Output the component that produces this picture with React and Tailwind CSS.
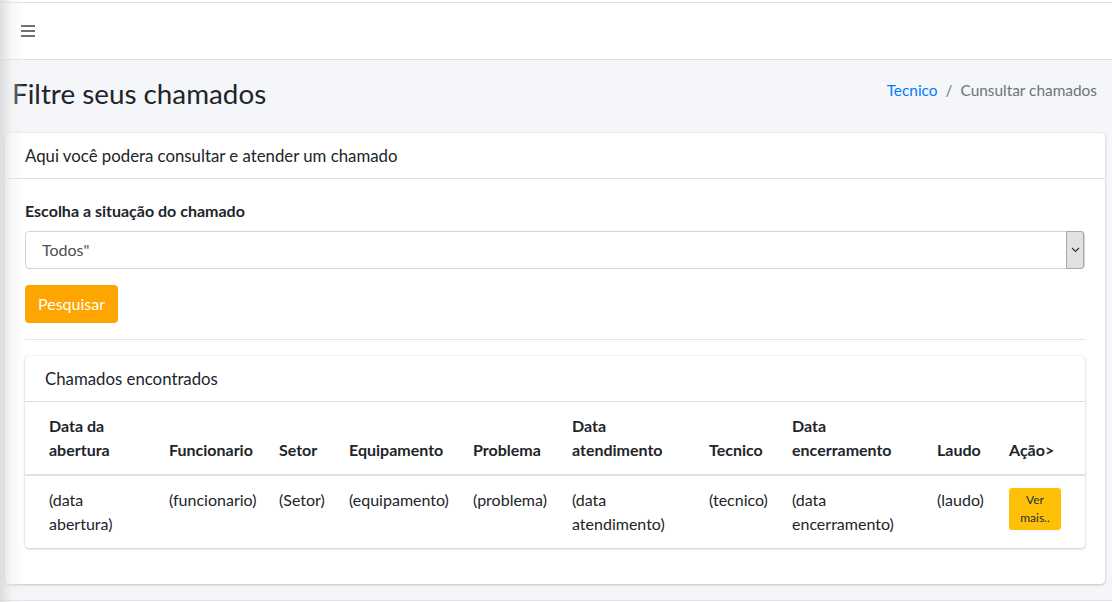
import React from 'react'

const cols = [
  { head: ['Data da', 'abertura'], cell: ['(data', 'abertura)'], w: 'w-[132px]', first: true },
  { head: ['Funcionario'], cell: ['(funcionario)'], w: 'w-[110px]' },
  { head: ['Setor'], cell: ['(Setor)'], w: 'w-[70px]' },
  { head: ['Equipamento'], cell: ['(equipamento)'], w: 'w-[124px]' },
  { head: ['Problema'], cell: ['(problema)'], w: 'w-[99px]' },
  { head: ['Data', 'atendimento'], cell: ['(data', 'atendimento)'], w: 'w-[137px]' },
  { head: ['Tecnico'], cell: ['(tecnico)'], w: 'w-[83px]' },
  { head: ['Data', 'encerramento'], cell: ['(data', 'encerramento)'], w: 'w-[145px]' },
  { head: ['Laudo'], cell: ['(laudo)'], w: 'w-[72px]' },
]

function Lines({ lines }) {
  return lines.map((l, i) => <div key={i}>{l}</div>)
}

export default function App() {
  return (
    <div className="relative min-h-[602px] bg-[#f4f6f9] text-[#212529] font-['Lato','Liberation_Sans',sans-serif] text-[16px] leading-[24px]">
      {/* sidebar shadow */}
      <div className="pointer-events-none absolute left-0 top-0 z-10 h-full w-[24px] bg-gradient-to-r from-[#d6d6d6]/80 via-[#eeeeee]/40 to-transparent" />

      {/* navbar */}
      <div className="h-[2px] bg-white" />
      <nav className="flex h-[58px] items-center border-y border-[#dee2e6] bg-white pl-[21px]">
        <div className="flex w-[14px] flex-col gap-[3px]">
          <span className="h-[2px] bg-[#6f6f6f]" />
          <span className="h-[2px] bg-[#6f6f6f]" />
          <span className="h-[2px] bg-[#6f6f6f]" />
        </div>
      </nav>

      {/* content header */}
      <div className="flex items-center justify-between pl-[12px] pr-[15px] pt-[16px] pb-[22px]">
        <h1 className="text-[27.8px] leading-[35px] font-normal">Filtre seus chamados</h1>
        <div className="flex items-center gap-[8px] text-[15.4px] mb-[8px]">
          <span className="text-[#007bff]">Tecnico</span>
          <span className="text-[#6c757d]">/</span>
          <span className="text-[#6c757d]">Cunsultar chamados</span>
        </div>
      </div>

      {/* main card */}
      <div className="ml-[5px] mr-[7px] rounded-[4px] bg-white shadow-[0_0_1px_rgba(0,0,0,0.125),0_1px_3px_rgba(0,0,0,0.2)]">
        <div className="border-b border-black/[0.125] px-[20px] py-[12px] text-[16.8px] leading-[21px]">
          Aqui você podera consultar e atender um chamado
        </div>
        <div className="px-[20px] pt-[20px] pb-[36px]">
          <label className="block font-bold mb-[8px]">Escolha a situação do chamado</label>
          <div className="flex h-[38px] items-stretch rounded-[4px] border border-[#ced4da] mb-[16px]">
            <div className="flex flex-1 items-center pl-[16px] text-[#495057]">Todos"</div>
            <div className="my-[-1px] flex w-[18px] items-center justify-center rounded-r-[3px] border border-[#a9a9a9] bg-[#e1e1e1]">
              <svg width="9" height="6" viewBox="0 0 9 6" fill="none">
                <path d="M1 1l3.5 3.5L8 1" stroke="#333" strokeWidth="1.1" />
              </svg>
            </div>
          </div>
          <button className="h-[38px] rounded-[4px] bg-[#ffa500] px-[13px] text-white">Pesquisar</button>
          <hr className="my-[16px] border-t border-black/10" />

          {/* results card */}
          <div className="rounded-[4px] bg-white shadow-[0_0_1px_rgba(0,0,0,0.125),0_1px_3px_rgba(0,0,0,0.2)]">
            <div className="border-b border-black/[0.125] px-[20px] py-[12px] text-[16.8px] leading-[21px]">
              Chamados encontrados
            </div>
            <table className="w-full table-fixed border-collapse text-left">
              <colgroup>
                {cols.map((c, i) => <col key={i} className={c.w} />)}
                <col />
              </colgroup>
              <thead>
                <tr className="border-b-2 border-[#dee2e6]">
                  {cols.map((c, i) => (
                    <th key={i} className={`align-bottom font-bold py-[12px] pr-[6px] ${c.first ? 'pl-[24px]' : 'pl-[12px]'}`}>
                      <Lines lines={c.head} />
                    </th>
                  ))}
                  <th className="align-bottom font-bold py-[12px] px-[12px]">Ação&gt;</th>
                </tr>
              </thead>
              <tbody>
                <tr>
                  {cols.map((c, i) => (
                    <td key={i} className={`align-top py-[12px] pr-[6px] ${c.first ? 'pl-[24px]' : 'pl-[12px]'}`}>
                      <Lines lines={c.cell} />
                    </td>
                  ))}
                  <td className="align-top p-[12px]">
                    <button className="flex w-[52px] flex-col items-center rounded-[3px] bg-[#ffc107] py-[3px] text-[12px] leading-[18px] text-[#1f2d3d]">
                      <span>Ver</span>
                      <span>mais..</span>
                    </button>
                  </td>
                </tr>
              </tbody>
            </table>
          </div>
        </div>
      </div>

      <div className="absolute bottom-0 left-0 right-0 h-[2px] border-t border-[#dee2e6] bg-white" />
    </div>
  )
}
